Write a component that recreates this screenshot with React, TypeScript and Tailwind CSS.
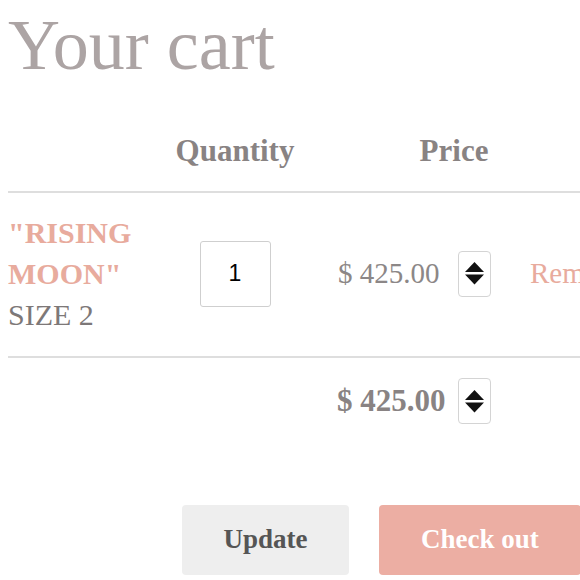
import React from 'react';

const serif = { fontFamily: '"Liberation Serif", "DejaVu Serif", serif' };

function Arrows() {
  return (
    <div className="flex h-[46px] w-[33px] shrink-0 items-center justify-center rounded-[4px] border-[1.5px] border-[#d4d4d4] bg-white">
      <svg width="19" height="23" viewBox="0 0 19 23">
        <polygon points="9.5,0 19,10 0,10" fill="#111" />
        <polygon points="0,12.5 19,12.5 9.5,22.5" fill="#111" />
      </svg>
    </div>
  );
}

export default function App() {
  return (
    <div className="h-[580px] w-[580px] overflow-hidden bg-white" style={serif}>
      <div className="w-[660px] pl-[8px]">
        {/* Title */}
        <h1 className="mt-[10px] text-[72px] leading-[70px] text-[#aca4a4]">Your cart</h1>

        {/* Header */}
        <div className="mt-[55px] flex text-[31px] font-bold leading-[32px] text-[#898383]">
          <div className="w-[162px]" />
          <div className="w-[130px] text-center">Quantity</div>
          <div className="w-[74px]" />
          <div className="w-[160px] text-center">Price</div>
        </div>
        <div className="mt-[24px] h-[2px] bg-[#dedede]" />

        {/* Item row */}
        <div className="flex items-center pb-[21px] pt-[19px]">
          <div className="w-[162px] text-[30px] leading-[41px]">
            <div className="font-bold text-[#e8ab9d]">"RISING MOON"</div>
            <div className="text-[#7d7878]">SIZE 2</div>
          </div>
          <div className="flex w-[130px] justify-center">
            <div
              className="flex h-[66px] w-[71px] items-center justify-center rounded-[3px] border-[1.5px] border-[#cfcfcf] text-[23px] text-black"
              style={{ fontFamily: '"Liberation Sans", Arial, sans-serif' }}
            >
              1
            </div>
          </div>
          <div className="flex w-[230px] items-center pl-[38px]">
            <span className="w-[120px] text-[29px] text-[#8c8787]">$ 425.00</span>
            <Arrows />
          </div>
          <div className="text-[29px] text-[#e8ab9d]">Remove</div>
        </div>
        <div className="h-[2px] bg-[#dedede]" />

        {/* Total row */}
        <div className="flex items-center pt-[20px]">
          <div className="w-[329px]" />
          <span className="w-[121px] text-[31px] font-bold text-[#898383]">$ 425.00</span>
          <Arrows />
        </div>

        {/* Buttons */}
        <div className="mt-[80px] flex gap-[30px] pl-[174px]">
          <button className="h-[70px] w-[167px] rounded-[4px] bg-[#eeeeee] text-[27px] font-bold text-[#555]">
            Update
          </button>
          <button className="h-[70px] w-[202px] rounded-[4px] bg-[#ecaea3] text-[27px] font-bold text-white">
            Check out
          </button>
        </div>
      </div>
    </div>
  );
}
